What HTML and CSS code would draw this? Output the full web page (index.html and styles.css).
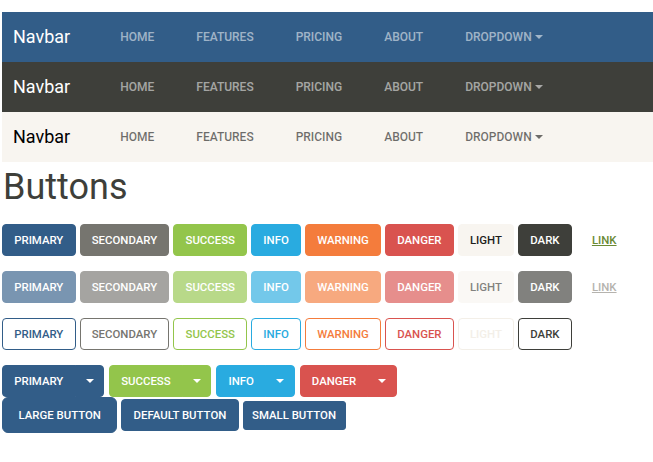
FILE: index.html
```html
<!DOCTYPE html>
<html lang="en">
<head>
<meta charset="utf-8">
<title>Sandstone</title>
<link rel="stylesheet" href="styles.css">
</head>
<body>
<div class="page">
  <nav class="navbar navbar-primary">
    <span class="brand">Navbar</span>
    <ul class="nav">
      <li class="nav-link">Home</li>
      <li class="nav-link">Features</li>
      <li class="nav-link">Pricing</li>
      <li class="nav-link">About</li>
      <li class="nav-link">Dropdown<span class="caret"></span></li>
    </ul>
  </nav>
  <nav class="navbar navbar-dark">
    <span class="brand">Navbar</span>
    <ul class="nav">
      <li class="nav-link">Home</li>
      <li class="nav-link">Features</li>
      <li class="nav-link">Pricing</li>
      <li class="nav-link">About</li>
      <li class="nav-link">Dropdown<span class="caret"></span></li>
    </ul>
  </nav>
  <nav class="navbar navbar-light">
    <span class="brand">Navbar</span>
    <ul class="nav">
      <li class="nav-link">Home</li>
      <li class="nav-link">Features</li>
      <li class="nav-link">Pricing</li>
      <li class="nav-link">About</li>
      <li class="nav-link">Dropdown<span class="caret"></span></li>
    </ul>
  </nav>

  <h1 class="title">Buttons</h1>

  <div class="row">
    <button class="btn btn-primary">Primary</button>
    <button class="btn btn-secondary">Secondary</button>
    <button class="btn btn-success">Success</button>
    <button class="btn btn-info">Info</button>
    <button class="btn btn-warning">Warning</button>
    <button class="btn btn-danger">Danger</button>
    <button class="btn btn-light">Light</button>
    <button class="btn btn-dark">Dark</button>
    <button class="btn btn-link">Link</button>
  </div>

  <div class="row disabled">
    <button class="btn btn-primary">Primary</button>
    <button class="btn btn-secondary">Secondary</button>
    <button class="btn btn-success">Success</button>
    <button class="btn btn-info">Info</button>
    <button class="btn btn-warning">Warning</button>
    <button class="btn btn-danger">Danger</button>
    <button class="btn btn-light">Light</button>
    <button class="btn btn-dark">Dark</button>
    <button class="btn btn-link link-disabled">Link</button>
  </div>

  <div class="row">
    <button class="btn outline-primary">Primary</button>
    <button class="btn outline-secondary">Secondary</button>
    <button class="btn outline-success">Success</button>
    <button class="btn outline-info">Info</button>
    <button class="btn outline-warning">Warning</button>
    <button class="btn outline-danger">Danger</button>
    <button class="btn outline-light">Light</button>
    <button class="btn outline-dark">Dark</button>
  </div>

  <div class="row row-split">
    <div class="btn-group">
      <button class="btn btn-primary group-main">Primary</button>
      <button class="btn btn-primary group-toggle"><span class="caret"></span></button>
    </div>
    <div class="btn-group">
      <button class="btn btn-success group-main">Success</button>
      <button class="btn btn-success group-toggle"><span class="caret"></span></button>
    </div>
    <div class="btn-group">
      <button class="btn btn-info group-main">Info</button>
      <button class="btn btn-info group-toggle"><span class="caret"></span></button>
    </div>
    <div class="btn-group">
      <button class="btn btn-danger group-main">Danger</button>
      <button class="btn btn-danger group-toggle"><span class="caret"></span></button>
    </div>
  </div>

  <div class="row row-sizes">
    <button class="btn btn-primary btn-lg">Large button</button>
    <button class="btn btn-primary">Default button</button>
    <button class="btn btn-primary btn-sm">Small button</button>
  </div>
</div>
</body>
</html>
```
FILE: styles.css
```css
* { box-sizing: border-box; }

html, body {
  margin: 0;
  background: #ffffff;
}

body {
  font-family: Roboto, "Liberation Sans", sans-serif;
  color: #3e3f3a;
}

.page {
  padding: 12px 0 0 2px;
  display: flex;
  flex-direction: column;
}

/* Navbars */
.navbar {
  height: 50px;
  display: flex;
  align-items: center;
  padding-left: 11px;
}

.navbar-primary { background: #325d88; }
.navbar-dark { background: #3e3f3a; }
.navbar-light { background: #f8f5f0; }

.brand {
  font-size: 18px;
  line-height: 28px;
  margin-right: 29px;
}

.navbar-primary .brand,
.navbar-dark .brand { color: #ffffff; }
.navbar-light .brand { color: #000000; }

.nav {
  display: flex;
  list-style: none;
  margin: 0;
  padding: 0;
}

.nav-link {
  font-size: 12px;
  line-height: 22px;
  font-weight: 500;
  text-transform: uppercase;
  padding: 0 21px;
  display: flex;
  align-items: center;
}

.navbar-primary .nav-link,
.navbar-dark .nav-link { color: rgba(255, 255, 255, 0.55); }
.navbar-light .nav-link { color: rgba(0, 0, 0, 0.56); }

.caret {
  display: inline-block;
  width: 0;
  height: 0;
  border-top: 4px solid currentColor;
  border-left: 4px solid transparent;
  border-right: 4px solid transparent;
  margin-left: 3px;
  margin-top: -1px;
}

/* Heading */
.title {
  margin: 4px 0 15px 1px;
  font-size: 36px;
  line-height: 43px;
  font-weight: 400;
  color: #3e3f3a;
}

/* Rows */
.row {
  display: flex;
  align-items: center;
  gap: 4px;
  margin-bottom: 15px;
}

.row-split {
  gap: 5px;
  margin-bottom: 0;
}

.row-sizes {
  gap: 4px;
}

/* Buttons */
.btn {
  font-family: Roboto, "Liberation Sans", sans-serif;
  font-size: 11.4px;
  line-height: 22px;
  font-weight: 500;
  text-transform: uppercase;
  padding: 4px 11.2px;
  border: 1px solid transparent;
  border-radius: 4px;
  background: transparent;
  color: #ffffff;
  white-space: nowrap;
  cursor: pointer;
}

.btn-primary { background: #325d88; border-color: #325d88; }
.btn-secondary { background: #76756f; border-color: #76756f; }
.btn-success { background: #93c54b; border-color: #93c54b; }
.btn-info { background: #29abe0; border-color: #29abe0; }
.btn-warning { background: #f47c3c; border-color: #f47c3c; }
.btn-danger { background: #d9534f; border-color: #d9534f; }
.btn-light { background: #f8f5f0; border-color: #f8f5f0; color: #1e1e1c; }
.btn-dark { background: #3e3f3a; border-color: #3e3f3a; }

.btn-link {
  color: #6a8a35;
  text-decoration: underline;
  margin-left: 4px;
}

.disabled .btn { opacity: 0.65; }
.disabled .btn-light { color: #3e3f3a; }
.link-disabled { color: #8e8c84; }

.outline-primary { border-color: #325d88; color: #325d88; }
.outline-secondary { border-color: #76756f; color: #76756f; }
.outline-success { border-color: #93c54b; color: #93c54b; }
.outline-info { border-color: #29abe0; color: #29abe0; }
.outline-warning { border-color: #f47c3c; color: #f47c3c; }
.outline-danger { border-color: #d9534f; color: #d9534f; }
.outline-light { border-color: #f3efe8; color: #f3efe8; }
.outline-dark { border-color: #3e3f3a; color: #3e3f3a; }

/* Split groups */
.btn-group {
  display: flex;
}

.group-main {
  border-top-right-radius: 0;
  border-bottom-right-radius: 0;
}

.group-toggle {
  margin-left: -1px;
  padding-left: 10px;
  padding-right: 9.5px;
  border-top-left-radius: 0;
  border-bottom-left-radius: 0;
  display: flex;
  align-items: center;
}

.group-toggle .caret {
  margin-left: 0;
  margin-top: 0;
}

/* Sizes */
.btn-lg {
  padding: 6px 15.5px;
  border-radius: 6px;
}

.btn-sm {
  padding: 2.5px 8.5px;
  border-radius: 3px;
}
```
